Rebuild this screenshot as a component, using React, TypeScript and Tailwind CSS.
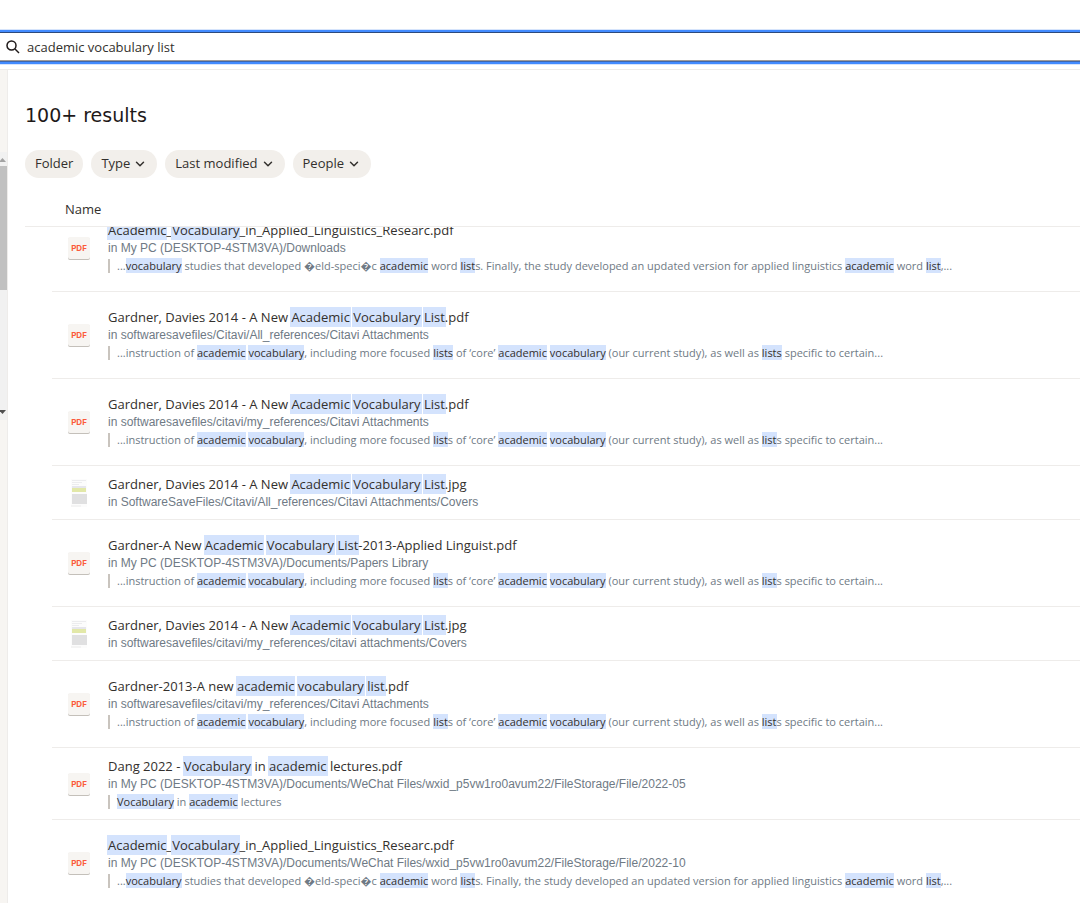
import { ChevronDown } from 'lucide-react'

type Result = {
  kind: 'pdf' | 'jpg'
  title: string
  path: string
  snippet?: string
  compact?: boolean
}

// Matched words are wrapped in [brackets]
const CORE =
  '...instruction of [academic] [vocabulary], including more focused [list]s of ‘core’ [academic] [vocabulary] (our current study), as well as [list]s specific to certain...'
const CORE_FULL = CORE.replaceAll('[list]s', '[lists]')
const STUDIES =
  '...[vocabulary] studies that developed \uFFFDeld-speci\uFFFDc [academic] word [list]s. Finally, the study developed an updated version for applied linguistics [academic] word [list],...'

const results: Result[] = [
  {
    kind: 'pdf',
    title: '[Academic]_[Vocabulary]_in_Applied_Linguistics_Researc.pdf',
    path: 'My PC (DESKTOP-4STM3VA)/Downloads',
    snippet: STUDIES,
  },
  {
    kind: 'pdf',
    title: 'Gardner, Davies 2014 - A New [Academic] [Vocabulary] [List].pdf',
    path: 'softwaresavefiles/Citavi/All_references/Citavi Attachments',
    snippet: CORE_FULL,
  },
  {
    kind: 'pdf',
    title: 'Gardner, Davies 2014 - A New [Academic] [Vocabulary] [List].pdf',
    path: 'softwaresavefiles/citavi/my_references/Citavi Attachments',
    snippet: CORE,
  },
  {
    kind: 'jpg',
    title: 'Gardner, Davies 2014 - A New [Academic] [Vocabulary] [List].jpg',
    path: 'SoftwareSaveFiles/Citavi/All_references/Citavi Attachments/Covers',
    compact: true,
  },
  {
    kind: 'pdf',
    title: 'Gardner-A New [Academic] [Vocabulary] [List]-2013-Applied Linguist.pdf',
    path: 'My PC (DESKTOP-4STM3VA)/Documents/Papers Library',
    snippet: CORE,
  },
  {
    kind: 'jpg',
    title: 'Gardner, Davies 2014 - A New [Academic] [Vocabulary] [List].jpg',
    path: 'softwaresavefiles/citavi/my_references/citavi attachments/Covers',
    compact: true,
  },
  {
    kind: 'pdf',
    title: 'Gardner-2013-A new [academic] [vocabulary] [list].pdf',
    path: 'softwaresavefiles/citavi/my_references/Citavi Attachments',
    snippet: CORE,
  },
  {
    kind: 'pdf',
    title: 'Dang 2022 - [Vocabulary] in [academic] lectures.pdf',
    path: 'My PC (DESKTOP-4STM3VA)/Documents/WeChat Files/wxid_p5vw1ro0avum22/FileStorage/File/2022-05',
    snippet: '[Vocabulary] in [academic] lectures',
    compact: true,
  },
  {
    kind: 'pdf',
    title: '[Academic]_[Vocabulary]_in_Applied_Linguistics_Researc.pdf',
    path: 'My PC (DESKTOP-4STM3VA)/Documents/WeChat Files/wxid_p5vw1ro0avum22/FileStorage/File/2022-10',
    snippet: STUDIES,
  },
]

const filters = [
  { label: 'Folder', menu: false },
  { label: 'Type', menu: true },
  { label: 'Last modified', menu: true },
  { label: 'People', menu: true },
]

function Marked({ text, className }: { text: string; className: string }) {
  return (
    <>
      {text.split(/[[\]]/).map((part, i) =>
        i % 2 === 1 ? (
          <mark key={i} className={className}>
            {part}
          </mark>
        ) : (
          part
        ),
      )}
    </>
  )
}

function PdfIcon() {
  return (
    <span className="flex h-[22px] w-[22px] items-center justify-center rounded-[2px] bg-[#f7f5f2] font-['Inter'] text-[8px] leading-none font-bold text-[#fb5a3c] shadow-[0_1px_0_#c4c0ba]">
      PDF
    </span>
  )
}

function CoverThumb() {
  return (
    <svg width="22" height="28" viewBox="0 0 22 28" aria-hidden="true">
      <rect x="3" y="0" width="16" height="28" fill="#fcfcfc" />
      <path d="M4 1.5h14M4 3.5h10M4 5.5h7" stroke="#ececee" />
      <rect x="4" y="7" width="14" height="2" fill="#e6e6ec" />
      <rect x="4" y="9" width="14" height="4" fill="#e2e8a8" />
      <rect x="4" y="15" width="15" height="10" fill="#e0e0e1" />
      <path d="M3 27h10" stroke="#ececec" />
    </svg>
  )
}

export default function App() {
  return (
    <div className="flex h-screen flex-col overflow-hidden bg-white font-['Open_Sans','Liberation_Sans',sans-serif] text-[#33302d]">
      <header className="shrink-0 border-b border-[#eeecea] pt-[30px] pb-[5px]">
        <label className="flex h-[34px] items-center gap-[7px] border-y-2 border-[#428bff] pl-[6px] shadow-[0_0_0_1px_#d6e4fb,inset_0_1px_0_#2d4a7d,inset_0_-1px_0_#3f66aa,inset_0_-2px_0_#a09b98]">
          <svg width="14" height="14" viewBox="0 0 14 14" fill="none" stroke="#1e1919" strokeWidth="1.5">
            <circle cx="5.5" cy="5.5" r="4.5" />
            <path d="M9 9l4 4" />
          </svg>
          <input
            type="text"
            aria-label="Search"
            defaultValue="academic vocabulary list"
            className="min-w-0 flex-1 bg-transparent pt-[2px] text-[13px] outline-none"
          />
        </label>
      </header>

      <div className="flex min-h-0 flex-1">
        <aside className="flex w-2 shrink-0 flex-col border-r border-[#eeecea] bg-[#f7f5f2]">
          <div className="mt-[82px] flex h-[268px] flex-col items-start bg-[#f1f1f1]">
            <svg width="7" height="14" viewBox="0 0 7 14" className="shrink-0">
              <path d="M-1 10L2.5 6L6 10z" fill="#a3a3a3" />
            </svg>
            <div className="mb-auto h-[124px] w-full bg-[#c1c1c1]" />
            <svg width="7" height="14" viewBox="0 0 7 14" className="shrink-0">
              <path d="M-1 4L2.5 8L6 4z" fill="#505050" />
            </svg>
          </div>
        </aside>

        <main className="flex min-w-0 flex-1 flex-col pl-[17px]">
          <h1 className="pt-[31px] pb-[21px] font-['DejaVu_Sans'] text-[19px] leading-7 text-[#1e1919]">
            100+ results
          </h1>

          <div className="flex gap-2">
            {filters.map((f) => (
              <button
                key={f.label}
                type="button"
                className="flex h-7 items-center gap-[3px] rounded-full bg-[#f2efeb] px-[10px] text-[13px]"
              >
                {f.label}
                {f.menu && <ChevronDown size={14} strokeWidth={2.5} />}
              </button>
            ))}
          </div>

          <table className="mt-[14px] flex min-h-0 flex-1 flex-col">
            <thead className="block shrink-0">
              <tr className="block border-b border-[#eeecea]">
                <th className="block pt-[7px] pb-[7px] pl-10 text-left text-[13px] leading-5 font-normal">Name</th>
              </tr>
            </thead>
            <tbody className="block min-h-0 flex-1 overflow-hidden pl-[27px]">
              {results.map((r, i) => (
                <tr
                  key={i}
                  className={`block border-b border-[#eeecea] pl-4 first:-mt-[22px] ${r.compact ? 'pt-[9px] pb-2' : 'py-4'}`}
                >
                  <td className="flex items-center gap-[18px]">
                    <div className="shrink-0">{r.kind === 'pdf' ? <PdfIcon /> : <CoverThumb />}</div>
                    <div className="min-w-0 whitespace-nowrap">
                      <p className="text-[13px] leading-[18px]">
                        <Marked
                          text={r.title}
                          className="bg-[#d4e3fd] text-inherit shadow-[0_0_0_1px_#d4e3fd]"
                        />
                      </p>
                      <p className="font-['Liberation_Sans'] text-xs leading-[18px] text-[#6f7a85]">in {r.path}</p>
                      {r.snippet && (
                        <p className="flex h-[18px] items-center text-[11px] text-[#6f7a85]">
                          <span className="mr-[7px] h-[14px] w-[2px] bg-[#c9c4be]" />
                          <span>
                            <Marked text={r.snippet} className="bg-[#d4e3fd] text-[#33302d]" />
                          </span>
                        </p>
                      )}
                    </div>
                  </td>
                </tr>
              ))}
            </tbody>
          </table>
        </main>
      </div>
    </div>
  )
}
